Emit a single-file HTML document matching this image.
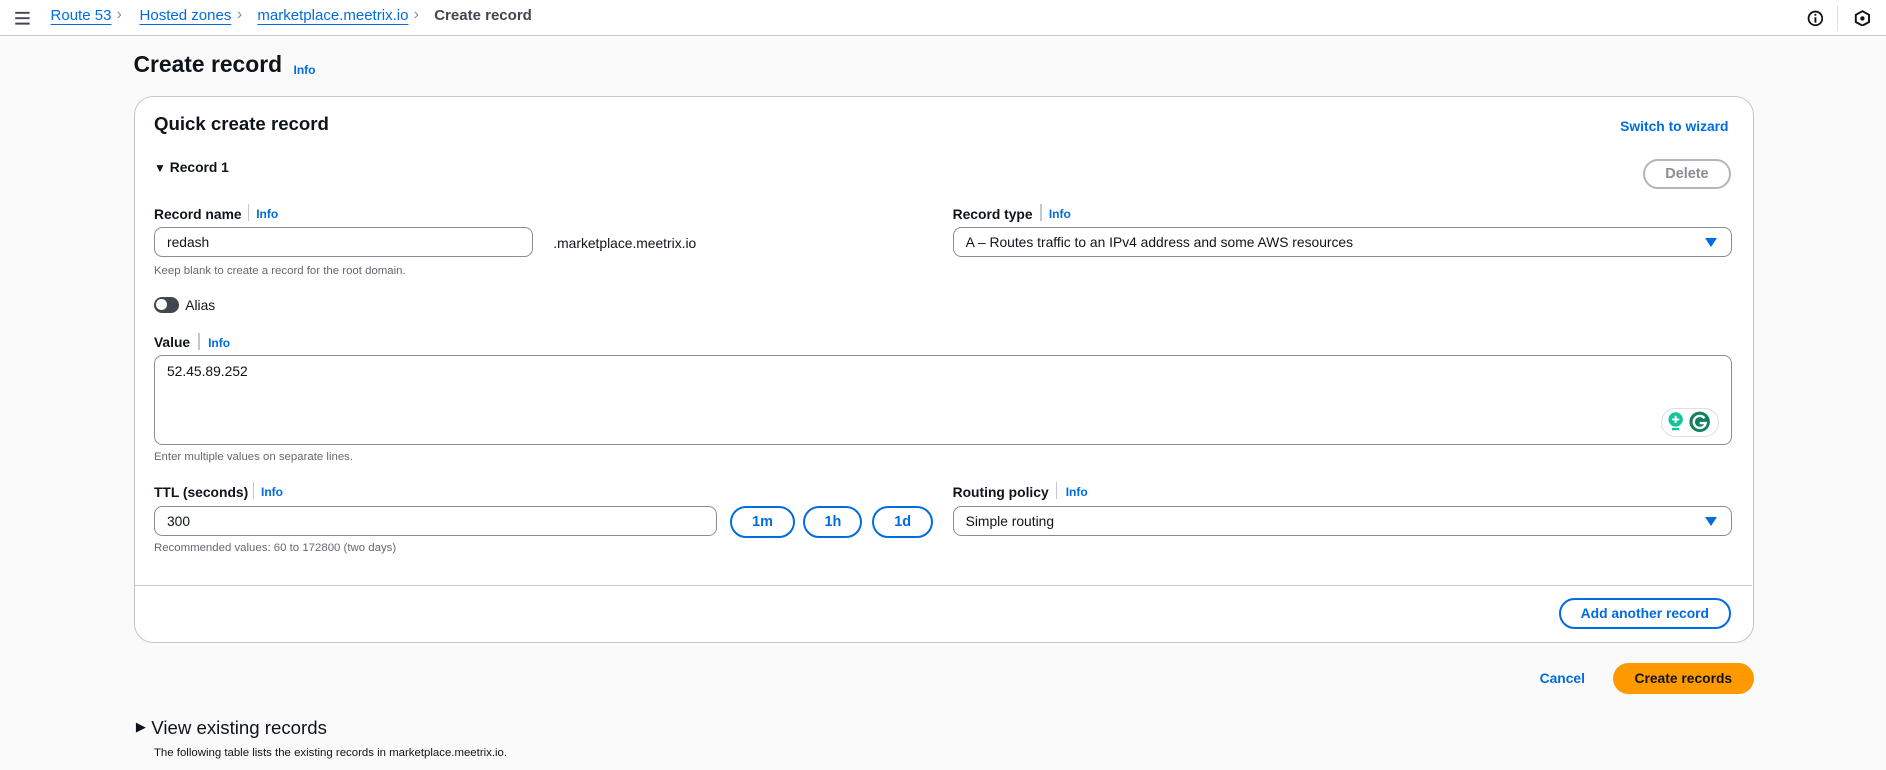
<!DOCTYPE html>
<html><head><meta charset="utf-8"><style>
*{box-sizing:border-box;margin:0;padding:0}
html,body{width:1886px;height:770px;overflow:hidden;background:#fafafa}
#r{zoom:1.20281;width:1568px;height:640px;position:relative;font-family:"Liberation Sans",sans-serif;color:#0f141a}
.a{position:absolute;white-space:nowrap}
.top{left:0;top:0;width:1568px;height:30px;background:#fff;border-bottom:1px solid #c6c6cd}
.bc{font-size:12.5px;color:#006ce0;text-decoration:underline;text-underline-offset:3px}
.sep{color:#8c8c94;font-size:13px}
.lbl{font-size:11.5px;font-weight:bold}
.info{font-size:10px;font-weight:bold;color:#006ce0}
.vbar{width:1px;height:14px;background:#c6c6cd}
.in{background:#fff;border:1px solid #8c8c94;border-radius:7px;font-size:11.5px;padding-left:10px;display:flex;align-items:center}
.hint{font-size:9.5px;color:#656871}
.btn{border:2px solid #006ce0;border-radius:14px;color:#006ce0;font-weight:bold;font-size:12px;display:flex;align-items:center;justify-content:center;background:#fff}
.tri{position:absolute;right:12px;top:8px;width:0;height:0;border-left:5px solid transparent;border-right:5px solid transparent;border-top:8px solid #006ce0}
</style></head><body><div id="r">
<div class="a top"></div>
<svg class="a" style="left:12px;top:9px" width="14" height="12"><path d="M1 1.5H13M1 6H13M1 10.5H13" stroke="#424650" stroke-width="1.6"/></svg>
<span class="a bc" style="left:42px;top:6px">Route 53</span>
<span class="a sep" style="left:97px;top:5px">&#x203A;</span>
<span class="a bc" style="left:116px;top:6px">Hosted zones</span>
<span class="a sep" style="left:197px;top:5px">&#x203A;</span>
<span class="a bc" style="left:214px;top:6px">marketplace.meetrix.io</span>
<span class="a sep" style="left:344px;top:5px">&#x203A;</span>
<span class="a" style="left:361px;top:6px;font-size:12.5px;color:#424650;font-weight:bold">Create record</span>
<svg class="a" style="left:1502px;top:8px" width="14" height="14"><circle cx="7" cy="7" r="5.7" fill="none" stroke="#0f141a" stroke-width="1.5"/><path d="M7 6V10.5" stroke="#0f141a" stroke-width="1.6"/><circle cx="7" cy="4" r="0.9" fill="#0f141a"/></svg>
<div class="a" style="left:1527px;top:4px;width:1px;height:22px;background:#dedee3"></div>
<svg class="a" style="left:1541px;top:8px" width="14" height="14"><path d="M7 1L12.5 4V10L7 13L1.5 10V4Z" fill="none" stroke="#0f141a" stroke-width="1.6"/><circle cx="7" cy="7" r="1.8" fill="#0f141a"/></svg>

<span class="a" style="left:111px;top:42px;font-size:19px;font-weight:bold">Create record</span>
<span class="a info" style="left:244px;top:52px">Info</span>

<div class="a" style="left:111px;top:80px;width:1347px;height:455px;background:#fff;border:1px solid #c6c6cd;border-radius:16px"></div>
<span class="a" style="left:128px;top:94px;font-size:15.5px;font-weight:bold">Quick create record</span>
<span class="a" style="left:1347px;top:98px;font-size:11.5px;font-weight:bold;color:#006ce0">Switch to wizard</span>
<span class="a" style="left:128px;top:132px;font-size:11.5px;font-weight:bold"><span style="font-size:10px">&#9660;</span> Record 1</span>
<div class="a" style="left:1366px;top:132px;width:73px;height:25px;border:2px solid #b4b4bb;border-radius:13px;color:#8c8c94;font-weight:bold;font-size:12px;display:flex;align-items:center;justify-content:center">Delete</div>

<span class="a lbl" style="left:128px;top:171px">Record name</span>
<div class="a vbar" style="left:206px;top:170px"></div>
<span class="a info" style="left:213px;top:172px">Info</span>
<div class="a in" style="left:128px;top:189px;width:315px;height:25px">redash</div>
<span class="a" style="left:460px;top:195px;font-size:11.5px">.marketplace.meetrix.io</span>
<span class="a hint" style="left:128px;top:220px">Keep blank to create a record for the root domain.</span>

<span class="a lbl" style="left:792px;top:171px">Record type</span>
<div class="a vbar" style="left:865px;top:170px"></div>
<span class="a info" style="left:872px;top:172px">Info</span>
<div class="a in" style="left:792px;top:189px;width:648px;height:25px">A – Routes traffic to an IPv4 address and some AWS resources<div class="tri"></div></div>

<div class="a" style="left:128px;top:247px;width:21px;height:13px;border-radius:7px;background:#424650"></div>
<div class="a" style="left:130px;top:249px;width:9px;height:9px;border-radius:50%;background:#fff"></div>
<span class="a" style="left:154px;top:247px;font-size:11.5px">Alias</span>

<span class="a lbl" style="left:128px;top:278px">Value</span>
<div class="a vbar" style="left:165px;top:277px"></div>
<span class="a info" style="left:173px;top:279px">Info</span>
<div class="a" style="left:128px;top:295px;width:1312px;height:75px;background:#fff;border:1px solid #8c8c94;border-radius:7px;font-size:11.5px;padding:6px 10px">52.45.89.252</div>
<div class="a" style="left:1381px;top:339px;width:48px;height:24px;border:1px solid #dedee3;border-radius:12px;background:#fff"></div>
<svg class="a" style="left:1385px;top:342px" width="40" height="18"><circle cx="8" cy="7" r="6" fill="#15c39a"/><path d="M8 4V10M5 7H11" stroke="#fff" stroke-width="1.6"/><path d="M5 15H11" stroke="#15c39a" stroke-width="2"/><circle cx="28" cy="9" r="8.5" fill="#11815f"/><path d="M32 6A5 5 0 1 0 33 10H28" fill="none" stroke="#fff" stroke-width="2"/></svg>
<span class="a hint" style="left:128px;top:375px">Enter multiple values on separate lines.</span>

<span class="a lbl" style="left:128px;top:402px">TTL (seconds)</span>
<div class="a vbar" style="left:210px;top:401px"></div>
<span class="a info" style="left:217px;top:403px">Info</span>
<div class="a in" style="left:128px;top:421px;width:468px;height:25px">300</div>
<div class="a btn" style="left:607px;top:421px;width:54px;height:26px">1m</div>
<div class="a btn" style="left:668px;top:421px;width:49px;height:26px">1h</div>
<div class="a btn" style="left:725px;top:421px;width:51px;height:26px">1d</div>
<span class="a hint" style="left:128px;top:451px">Recommended values: 60 to 172800 (two days)</span>

<span class="a lbl" style="left:792px;top:402px">Routing policy</span>
<div class="a vbar" style="left:878px;top:401px"></div>
<span class="a info" style="left:886px;top:403px">Info</span>
<div class="a in" style="left:792px;top:421px;width:648px;height:25px">Simple routing<div class="tri"></div></div>

<div class="a" style="left:112px;top:486px;width:1345px;height:1px;background:#c6c6cd"></div>
<div class="a btn" style="left:1296px;top:497px;width:143px;height:26px;font-size:11.5px">Add another record</div>

<span class="a" style="left:1280px;top:557px;font-size:11.5px;font-weight:bold;color:#006ce0">Cancel</span>
<div class="a" style="left:1341px;top:551px;width:117px;height:26px;border-radius:13px;background:#ff9900;color:#0f141a;font-weight:bold;font-size:11.5px;display:flex;align-items:center;justify-content:center">Create records</div>

<span class="a" style="left:113px;top:596px;font-size:15.5px"><span style="font-size:11px;position:relative;top:-2px">&#9654;</span>&nbsp;View existing records</span>
<span class="a" style="left:128px;top:621px;font-size:9.5px">The following table lists the existing records in marketplace.meetrix.io.</span>
</div></body></html>
